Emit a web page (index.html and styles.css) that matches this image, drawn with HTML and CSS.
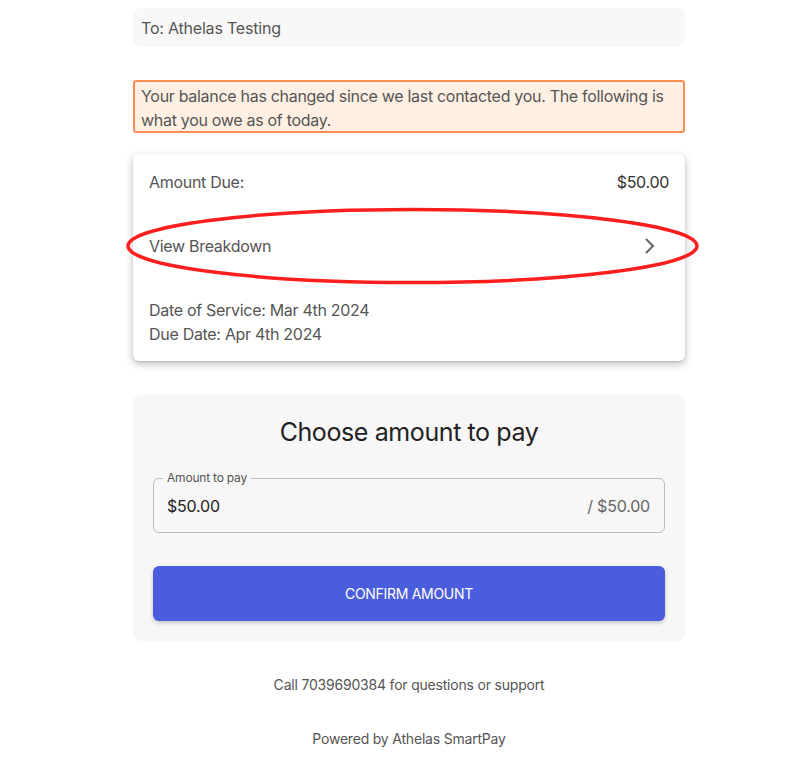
FILE: index.html
```html
<!DOCTYPE html>
<html>
<head>
<meta charset="utf-8">
<link rel="stylesheet" href="styles.css">
</head>
<body>
<main class="col">
  <div class="to">To: Athelas Testing</div>
  <div class="alert">Your balance has changed since we last contacted you. The following is what you owe as of today.</div>
  <section class="card">
    <div class="row"><span>Amount Due:</span><span class="amt">$50.00</span></div>
    <div class="row breakdown"><span>View Breakdown</span>
      <svg class="chev" width="12" height="20" viewBox="0 0 12 20"><path d="M3 3 L10 10 L3 17" fill="none" stroke="#666" stroke-width="2"/></svg>
    </div>
    <div class="dates">
      <div>Date of Service: Mar 4th 2024</div>
      <div>Due Date: Apr 4th 2024</div>
    </div>
    <svg class="ellipse" width="575" height="80" viewBox="0 0 575 80"><ellipse cx="287.5" cy="40" rx="284.5" ry="36.5" fill="none" stroke="#ff1e1e" stroke-width="3.5"/></svg>
  </section>
  <section class="pay">
    <h2 class="title">Choose amount to pay</h2>
    <div class="field">
      <span class="label">Amount to pay</span>
      <span class="val">$50.00</span><span class="max">/ $50.00</span>
    </div>
    <button class="btn">CONFIRM AMOUNT</button>
  </section>
  <p class="foot">Call 7039690384 for questions or support</p>
  <p class="foot powered">Powered by Athelas SmartPay</p>
</main>
</body>
</html>
```
FILE: styles.css
```css
* { box-sizing: border-box; }
body {
  margin: 0;
  background: #fff;
  font-family: Inter, "Noto Sans", sans-serif;
  color: #555;
}
.col {
  width: 552px;
  margin-left: 133px;
  padding-top: 8px;
  display: flex;
  flex-direction: column;
}
.to {
  height: 39px;
  background: #f8f8f8;
  border-radius: 8px;
  padding: 0 8px;
  display: flex;
  align-items: center;
  font-size: 16px;
  color: #555;
  letter-spacing: -0.2px;
}
.alert {
  margin-top: 33px;
  height: 53px;
  background: #fff0e3;
  border: 2px solid #fa8c55;
  border-radius: 3px;
  padding: 2px 6px;
  font-size: 16px;
  line-height: 24px;
  color: #555;
  letter-spacing: -0.3px;
}
.card {
  position: relative;
  margin-top: 21px;
  height: 207px;
  background: #fff;
  border-radius: 6px;
  box-shadow: 0 3px 8px rgba(0,0,0,0.25), 0 1px 2px rgba(0,0,0,0.12);
  padding: 16px 16px 0;
  font-size: 16px;
  color: #555;
  letter-spacing: -0.3px;
}
.row {
  display: flex;
  justify-content: space-between;
  align-items: center;
  height: 24px;
}
.amt { color: #333; }
.breakdown { margin-top: 40px; }
.chev { margin-right: 14px; }
.dates {
  margin-top: 40px;
  line-height: 24px;
}
.ellipse {
  position: absolute;
  left: -8px;
  top: 52px;
}
.pay {
  margin-top: 34px;
  height: 246px;
  background: #f7f7f7;
  border-radius: 8px;
  padding: 20px 20px 0;
  display: flex;
  flex-direction: column;
}
.title {
  margin: 0;
  text-align: center;
  font-size: 25px;
  font-weight: 400;
  color: #222;
  line-height: 34px;
  letter-spacing: -0.4px;
}
.field {
  position: relative;
  margin-top: 29px;
  height: 55px;
  border: 1px solid #bdbdbd;
  border-radius: 6px;
  padding: 0 14px 0 13px;
  display: flex;
  justify-content: space-between;
  align-items: center;
  font-size: 16px;
  letter-spacing: -0.2px;
}
.label {
  position: absolute;
  left: 9px;
  top: -8px;
  padding: 0 4px;
  background: #f7f7f7;
  font-size: 12px;
  line-height: 14px;
  color: #555;
}
.val { color: #222; }
.max { color: #666; }
.btn {
  margin-top: 33px;
  height: 55px;
  width: 100%;
  border: none;
  border-radius: 6px;
  background: #4a5ddc;
  color: #fff;
  font-family: Inter, "Noto Sans", sans-serif;
  font-size: 14px;
  letter-spacing: -0.3px;
  box-shadow: 0 2px 4px rgba(0,0,0,0.2);
}
.foot {
  margin: 35px 0 0;
  text-align: center;
  font-size: 14px;
  color: #555;
  line-height: 18px;
  letter-spacing: -0.2px;
}
.powered { margin-top: 36px; }
```
